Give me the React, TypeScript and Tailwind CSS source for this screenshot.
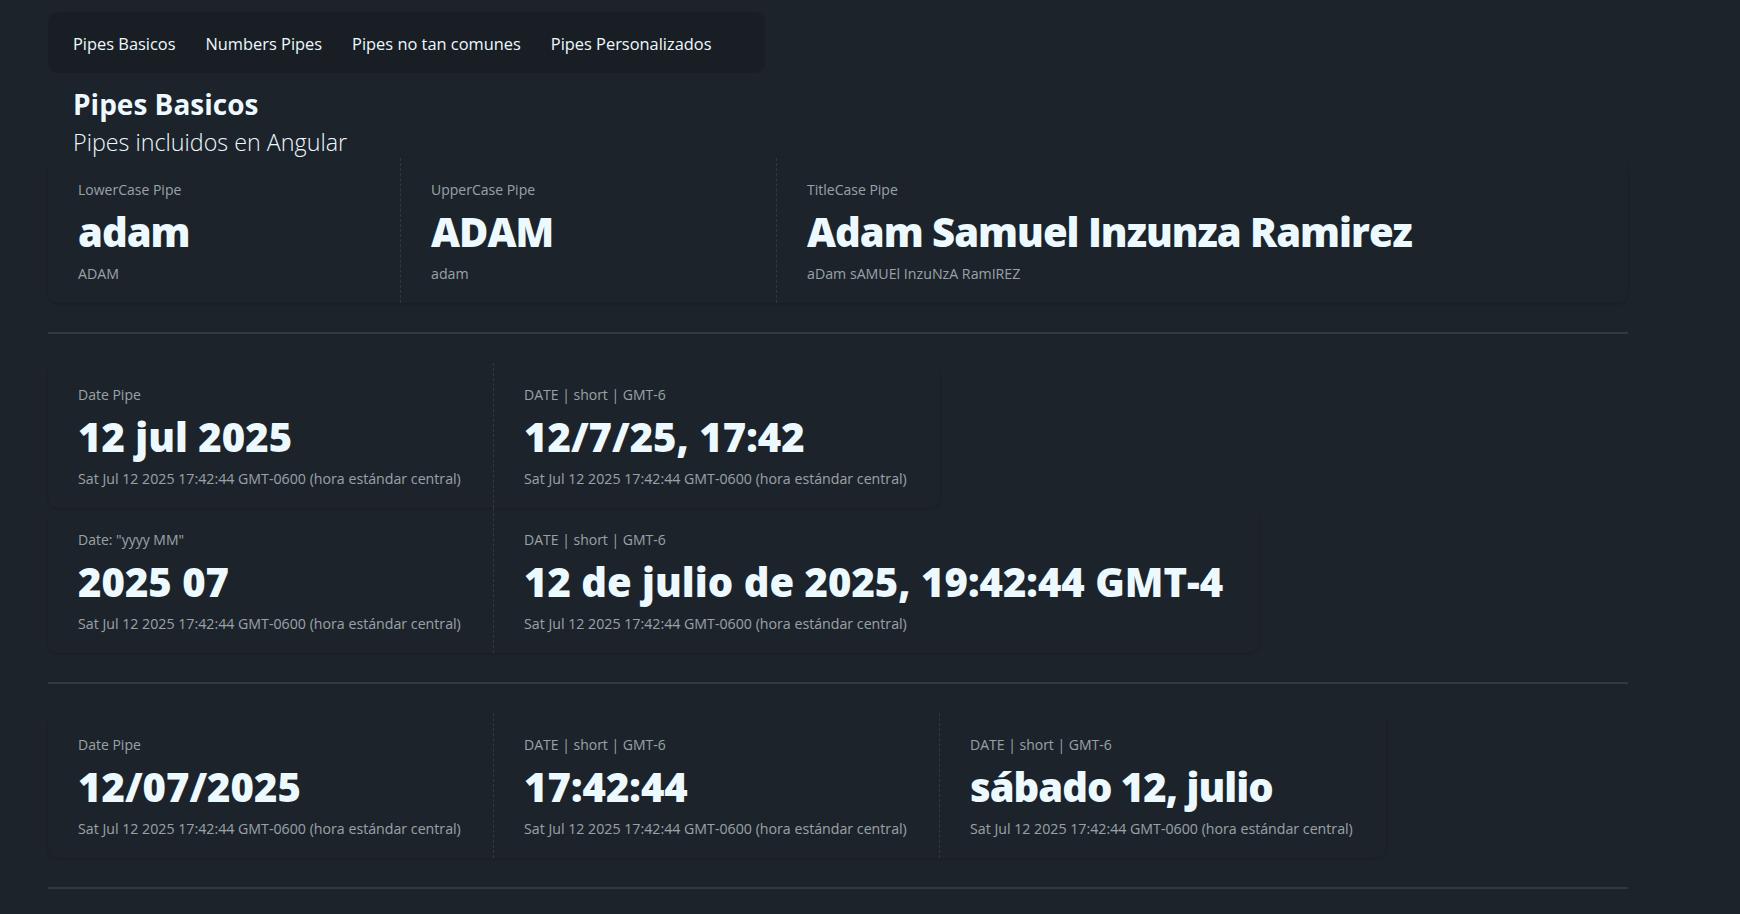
import clsx from 'clsx';

type Stat = { title: string; value: string; desc: string; tight?: boolean };

const DESC = 'Sat Jul 12 2025 17:42:44 GMT-0600 (hora estándar central)';

const navItems = ['Pipes Basicos', 'Numbers Pipes', 'Pipes no tan comunes', 'Pipes Personalizados'];

// each card keeps its own column widths, same as the inline-grid stats of the screenshot
const cards: { cols: string; stats: Stat[]; divider?: boolean }[] = [
  {
    cols: 'w-full grid-cols-[353px_376px_1fr]',
    divider: true,
    stats: [
      { title: 'LowerCase Pipe', value: 'adam', desc: 'ADAM', tight: true },
      { title: 'UpperCase Pipe', value: 'ADAM', desc: 'adam', tight: true },
      { title: 'TitleCase Pipe', value: 'Adam Samuel Inzunza Ramirez', desc: 'aDam sAMUEl InzuNzA RamIREZ', tight: true },
    ],
  },
  {
    cols: 'w-fit grid-cols-[446px_446px]',
    stats: [
      { title: 'Date Pipe', value: '12 jul 2025', desc: DESC },
      { title: 'DATE | short | GMT-6', value: '12/7/25, 17:42', desc: DESC },
    ],
  },
  {
    cols: 'w-fit grid-cols-[446px_765px]',
    divider: true,
    stats: [
      { title: 'Date: "yyyy MM"', value: '2025 07', desc: DESC },
      { title: 'DATE | short | GMT-6', value: '12 de julio de 2025, 19:42:44 GMT-4', desc: DESC },
    ],
  },
  {
    cols: 'w-fit grid-cols-[446px_446px_446px]',
    divider: true,
    stats: [
      { title: 'Date Pipe', value: '12/07/2025', desc: DESC },
      { title: 'DATE | short | GMT-6', value: '17:42:44', desc: DESC },
      { title: 'DATE | short | GMT-6', value: 'sábado 12, julio', desc: DESC, tight: true },
    ],
  },
];

function StatItem({ stat }: { stat: Stat }) {
  return (
    <div className="flex flex-col whitespace-nowrap border-r border-dashed border-[#ecf9ff]/10 px-[30px] pt-[22px] pb-[19px] last:border-r-0">
      <div className="text-[14px] leading-[20px] text-[#ecf9ff]/60">{stat.title}</div>
      <div className={clsx('text-[40px] leading-[64px] font-extrabold', stat.tight && 'tracking-[-0.025em]')}>
        {stat.value}
      </div>
      <div className="text-[14.2px] leading-[20px] text-[#ecf9ff]/60">{stat.desc}</div>
    </div>
  );
}

function Divider() {
  return (
    <div className="flex h-[60px] items-center">
      <div className="h-[2px] w-full bg-[#ecf9ff]/10" />
    </div>
  );
}

export default function App() {
  return (
    <div className="min-h-screen bg-[#1d232a] font-['Open_Sans',sans-serif] text-[#ecf9ff]">
      <div className="ml-[48px] w-[1580px] pt-[12px]">
        <nav className="flex h-[61px] w-[717px] items-center rounded-[10px] bg-[#191e24] px-[10px] pt-[3px]">
          {navItems.map((item) => (
            <a key={item} className="cursor-pointer px-[15px] text-[16.4px] leading-[24px]">
              {item}
            </a>
          ))}
        </nav>

        <div className="px-[25px]">
          <h1 className="mt-[13px] text-[28px] leading-[36px] font-bold">Pipes Basicos</h1>
          <h2 className="mt-[5px] text-[23.3px] leading-[31px] font-light">Pipes incluidos en Angular</h2>
        </div>

        <div className="flex flex-col items-start">
          {cards.map((card, i) => (
            <div key={i} className="contents">
              <div className={clsx('grid rounded-[10px] shadow-sm', card.cols)}>
                {card.stats.map((s, j) => (
                  <StatItem key={j} stat={s} />
                ))}
              </div>
              {card.divider && (
                <div className="w-full">
                  <Divider />
                </div>
              )}
            </div>
          ))}
        </div>
      </div>
    </div>
  );
}
